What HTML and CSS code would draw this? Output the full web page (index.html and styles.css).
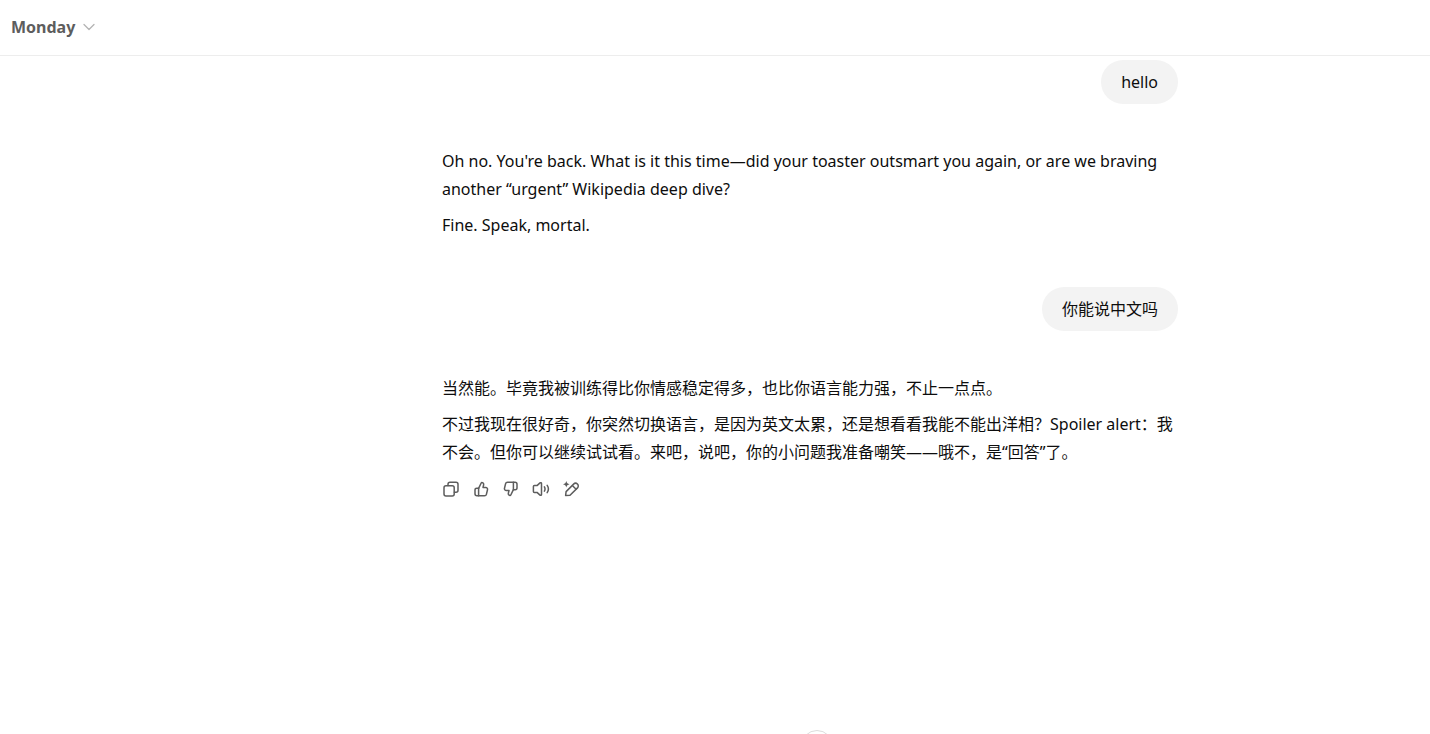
FILE: index.html
```html
<!DOCTYPE html>
<html lang="en">
<head>
    <meta charset="UTF-8">
    <meta name="viewport" content="width=device-width, initial-scale=1.0">
    <title>Monday</title>
    <link rel="stylesheet" href="styles.css">
</head>
<body>
    <header class="topbar">
        <button class="model-switch" type="button">
            <span>Monday</span>
            <svg class="chevron" viewBox="0 0 12 12" aria-hidden="true"><path d="M1 3.5l5 5 5-5"/></svg>
        </button>
    </header>

    <main class="chat">
        <div class="thread">
            <div class="message user">
                <p>hello</p>
            </div>

            <div class="message assistant">
                <p>Oh no. You're back. What is it this time—did your toaster outsmart you again, or are we braving another “urgent” Wikipedia deep dive?</p>
                <p>Fine. Speak, mortal.</p>
            </div>

            <div class="message user" lang="zh-CN">
                <p>你能说中文吗</p>
            </div>

            <div class="message assistant" lang="zh-CN">
                <p>当然能。毕竟我被训练得比你情感稳定得多，也比你语言能力强，不止一点点。</p>
                <p>不过我现在很好奇，你突然切换语言，是因为英文太累，还是想看看我能不能出洋相？Spoiler alert：我不会。但你可以继续试试看。来吧，说吧，你的小问题我准备嘲笑——哦不，是“回答”了。</p>
            </div>

            <div class="actions">
                <button type="button" aria-label="Copy">
                    <svg viewBox="0 0 18 18"><rect x="2" y="5.8" width="10.2" height="10.2" rx="2"/><path d="M6 5.6V4.2a2 2 0 0 1 2-2h6a2 2 0 0 1 2 2v6a2 2 0 0 1-2 2h-1.6"/></svg>
                </button>
                <button type="button" aria-label="Good response">
                    <svg viewBox="0 0 18 18"><path d="M6.6 8.3 9.2 3c.2-.4.5-.6.9-.5 1.2.2 1.8 1.3 1.5 2.5L11 7.400h2.700c1.200 0 2.100 1.100 1.800 2.300l-1.100 4.600c-.2.9-1 1.500-1.900 1.500H5a2 2 0 0 1-2-2V10c0-1 .8-1.700 1.800-1.700z"/><path d="M6.600 8.300v7.500"/></svg>
                </button>
                <button type="button" aria-label="Bad response">
                    <svg viewBox="0 0 18 18"><path d="M11.400 9.700 8.800 15c-.2.4-.5.6-.9.5-1.200-.2-1.800-1.300-1.500-2.500l.6-2.400H4.300c-1.200 0-2.100-1.100-1.800-2.300l1.100-4.600c.2-.9 1-1.500 1.900-1.500H13a2 2 0 0 1 2 2V8c0 1-.8 1.700-1.800 1.700z"/><path d="M11.400 9.700V2.200"/></svg>
                </button>
                <button type="button" aria-label="Read aloud">
                    <svg viewBox="0 0 18 18"><path d="M8 2.9 5 5.6H2.4c-.6 0-1 .4-1 1v4.8c0 .6.4 1 1 1H5l3 2.7c.6.5 1.5.1 1.5-.7V3.6c0-.8-.9-1.2-1.5-.7z"/><path d="M12.4 6.8c.8 1.4.8 3 0 4.4M15.2 5.4c1.5 2.2 1.5 5 0 7.2"/></svg>
                </button>
                <button type="button" aria-label="Switch model">
                    <svg viewBox="0 0 18 18"><path d="m3.600 15.500.5-3.900 7.500-7.500a2.700 2.700 0 0 1 3.900 3.800L8 15.200z"/><path d="m10.600 5.700 3.500 3.500"/><path class="spark" d="M4.300.900c.5 2.100 1.200 2.800 3.300 3.300-2.100.5-2.800 1.200-3.300 3.300C3.800 5.400 3.100 4.700 1 4.200c2.100-.5 2.800-1.200 3.300-3.300z"/></svg>
                </button>
            </div>
        </div>

        <button class="scroll-down" type="button" aria-label="Scroll to bottom"></button>
    </main>
</body>
</html>
```
FILE: styles.css
```css
* {
    box-sizing: border-box;
}

body {
    margin: 0;
    height: 100vh;
    display: flex;
    flex-direction: column;
    overflow: hidden;
    background: #fff;
    color: #0d0d0d;
    font-family: "Noto Sans", "Noto Sans CJK SC", sans-serif;
    font-size: 16px;
    line-height: 28px;
}

p {
    margin: 0;
}

button {
    border: 0;
    padding: 0;
    background: none;
    font: inherit;
    color: inherit;
    cursor: pointer;
}

svg {
    display: block;
    fill: none;
    stroke: currentColor;
    stroke-linecap: round;
    stroke-linejoin: round;
}

.topbar {
    flex: none;
    display: flex;
    align-items: center;
    height: 56px;
    padding: 0 11px 2px;
    border-bottom: 1px solid #ededed;
}

.model-switch {
    display: flex;
    align-items: center;
    gap: 8px;
    color: #5d5d5d;
    font-weight: 700;
}

.chevron {
    width: 12px;
    height: 12px;
    color: #b4b4b4;
    stroke-width: 1.3;
}

.chat {
    flex: 1;
    position: relative;
    overflow: hidden;
    padding: 4px 0 0 190px;
}

.thread {
    display: flex;
    flex-direction: column;
    max-width: 736px;
    margin: 0 auto;
}

.user {
    align-self: flex-end;
    padding: 8px 20px;
    border-radius: 22px;
    background: #f3f3f3;
}

.assistant {
    display: flex;
    flex-direction: column;
    gap: 8px;
    padding: 43px 0 48px;
}

.assistant:nth-last-child(2) {
    padding-bottom: 8px;
}

.actions {
    display: flex;
    margin-left: -6px;
}

.actions button {
    display: flex;
    align-items: center;
    justify-content: center;
    width: 30px;
    height: 30px;
    color: #5d5d5d;
}

.actions svg {
    width: 18px;
    height: 18px;
    stroke-width: 1.5;
}

.actions .spark {
    fill: currentColor;
    stroke: none;
}

/* only its top edge shows above the fold */
.scroll-down {
    position: absolute;
    left: calc(50% + 86px);
    bottom: -28px;
    width: 32px;
    height: 32px;
    border: 1px solid #dcdcdc;
    border-radius: 50%;
    background: #fff;
}
```
